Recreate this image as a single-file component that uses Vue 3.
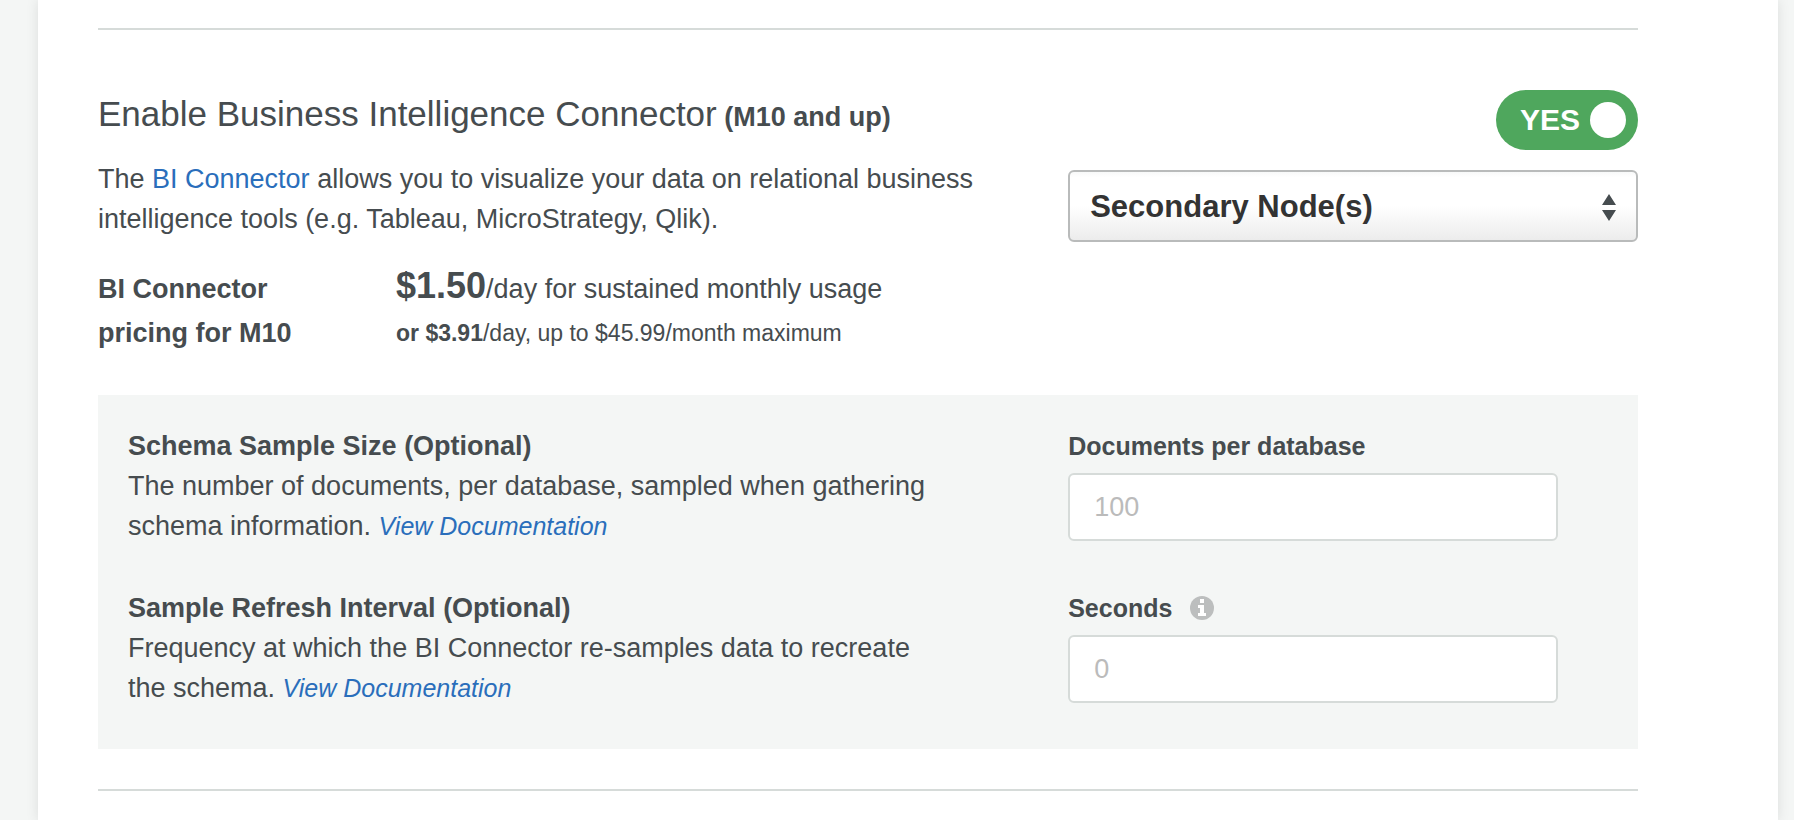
<script setup>
import { ref } from 'vue'

const enabled = ref(true)
const node = ref('secondary')
const sampleSize = ref('')
const refreshInterval = ref('')
</script>

<template>
  <main class="page">
    <div class="card">
      <hr class="rule" />

      <section class="connector">
        <div class="split">
          <div class="intro">
            <h2 class="title">
              Enable Business Intelligence Connector<strong class="tier"> (M10 and up)</strong>
            </h2>
            <p class="text">
              The <a class="link" href="#bi-connector">BI Connector</a> allows you to visualize your
              data on relational business intelligence tools (e.g. Tableau, MicroStrategy, Qlik).
            </p>
            <div class="pricing">
              <strong class="pricing-label">BI Connector pricing for M10</strong>
              <div>
                <p class="price-line"><strong class="price">$1.50</strong>/day for sustained monthly usage</p>
                <p class="price-line small"><strong>or $3.91</strong>/day, up to $45.99/month maximum</p>
              </div>
            </div>
          </div>

          <div class="controls">
            <button
              class="toggle"
              :class="{ off: !enabled }"
              type="button"
              role="switch"
              :aria-checked="enabled"
              aria-label="Enable Business Intelligence Connector"
              @click="enabled = !enabled"
            >
              <span>{{ enabled ? 'YES' : 'NO' }}</span>
              <span class="knob"></span>
            </button>
            <div class="select-wrap">
              <select v-model="node" class="select" aria-label="Read from node">
                <option value="secondary">Secondary Node(s)</option>
                <option value="primary">Primary Node</option>
                <option value="analytics">Analytics Node(s)</option>
              </select>
              <svg class="arrows" width="14" height="28" viewBox="0 0 14 28" aria-hidden="true">
                <path d="M7 0 L14 11 H0 Z M0 16 H14 L7 27 Z" fill="#464c4f" />
              </svg>
            </div>
          </div>
        </div>

        <div class="panel">
          <div class="split">
            <div class="option">
              <h3 class="option-title">Schema Sample Size (Optional)</h3>
              <p class="option-text">
                The number of documents, per database, sampled when gathering schema information.
                <a class="link doc" href="#sample-size">View Documentation</a>
              </p>
            </div>
            <div class="field">
              <label class="label" for="sample-size">Documents per database</label>
              <input id="sample-size" v-model="sampleSize" class="input" type="text" placeholder="100" />
            </div>
          </div>

          <div class="split">
            <div class="option">
              <h3 class="option-title">Sample Refresh Interval (Optional)</h3>
              <p class="option-text">
                Frequency at which the BI Connector re-samples data to recreate the schema.
                <a class="link doc" href="#refresh-interval">View Documentation</a>
              </p>
            </div>
            <div class="field">
              <label class="label" for="refresh-interval">
                Seconds
                <svg class="info" width="24" height="24" viewBox="0 0 24 24" aria-hidden="true">
                  <circle cx="12" cy="12" r="12" fill="#bcbebe" />
                  <path d="M10 3h4v4h-4z M8 9h6v8h2v3H8v-3h2v-5H8z" fill="#fff" />
                </svg>
              </label>
              <input id="refresh-interval" v-model="refreshInterval" class="input" type="text" placeholder="0" />
            </div>
          </div>
        </div>
      </section>

      <hr class="rule" />
    </div>
  </main>
</template>

<style>
body {
  margin: 0;
  background: #f4f6f5;
}
</style>

<style scoped>
.page {
  box-sizing: border-box;
  min-height: 100vh;
  padding: 0 16px 0 38px;
  display: flex;
  color: #464c4f;
  font-family: "Liberation Sans", Arial, sans-serif;
  font-size: 27px;
  line-height: 40px;
}

.card {
  flex: 1;
  min-width: 0;
  padding: 28px 140px 30px 60px;
  background: #fff;
  box-shadow: 0 0 12px rgba(0, 0, 0, 0.1);
}

.rule {
  height: 2px;
  margin: 0;
  border: 0;
  background: #d6dbd9;
}

.connector {
  padding: 60px 0 40px;
}

.split {
  display: grid;
  grid-template-columns: minmax(0, 63fr) minmax(0, 37fr);
}

.intro {
  padding-right: 40px;
}

.title {
  margin: 0;
  font-size: 35px;
  font-weight: 400;
  line-height: 48px;
}

.tier {
  font-size: 27px;
}

.text {
  margin: 18px 0 28px;
}

.link {
  color: #2a6ebb;
  text-decoration: none;
}

.pricing {
  display: grid;
  grid-template-columns: 210px 1fr;
  column-gap: 88px;
  line-height: 44px;
}

.price-line {
  margin: 0;
}

.price {
  font-size: 36px;
  line-height: 36px;
}

.small {
  font-size: 23px;
}

.controls {
  display: flex;
  flex-direction: column;
  align-items: flex-end;
  gap: 20px;
}

.toggle {
  display: flex;
  align-items: center;
  gap: 10px;
  height: 60px;
  padding: 0 12px 0 24px;
  border: 0;
  border-radius: 30px;
  background: #4fa75d;
  color: #fff;
  font: bold 30px "Liberation Sans", Arial, sans-serif;
  cursor: pointer;
}

.toggle.off {
  background: #b8bdbc;
}

.knob {
  width: 36px;
  height: 36px;
  border-radius: 50%;
  background: #fff;
}

.select-wrap {
  position: relative;
  width: 100%;
}

.select {
  display: block;
  box-sizing: border-box;
  width: 100%;
  height: 72px;
  padding: 0 56px 0 20px;
  appearance: none;
  border: 2px solid #b9bbbb;
  border-radius: 6px;
  background: linear-gradient(#f8f9f9, #fff 8%, #fff 50%, #ececec);
  color: #333;
  font: bold 31px "Liberation Sans", Arial, sans-serif;
}

.arrows {
  position: absolute;
  top: 24px;
  right: 22px;
  pointer-events: none;
}

.panel {
  display: grid;
  row-gap: 42px;
  margin-top: 40px;
  padding: 31px 0 41px;
  background: #f4f6f5;
}

.option {
  padding: 0 120px 0 30px;
}

.option-title {
  margin: 0;
  font-size: 27px;
  line-height: 40px;
}

.option-text {
  margin: 0;
}

.doc {
  font-size: 25px;
  font-style: italic;
}

.field {
  padding-right: 80px;
}

.label {
  display: flex;
  align-items: center;
  gap: 18px;
  margin-bottom: 7px;
  font-size: 25px;
  font-weight: 700;
}

.input {
  display: block;
  box-sizing: border-box;
  width: 100%;
  height: 68px;
  padding: 0 24px;
  border: 2px solid #d6dbd9;
  border-radius: 6px;
  background: #fff;
  color: #464c4f;
  font: 27px "Liberation Sans", Arial, sans-serif;
}

.input::placeholder {
  color: #bbb;
  opacity: 1;
}
</style>
